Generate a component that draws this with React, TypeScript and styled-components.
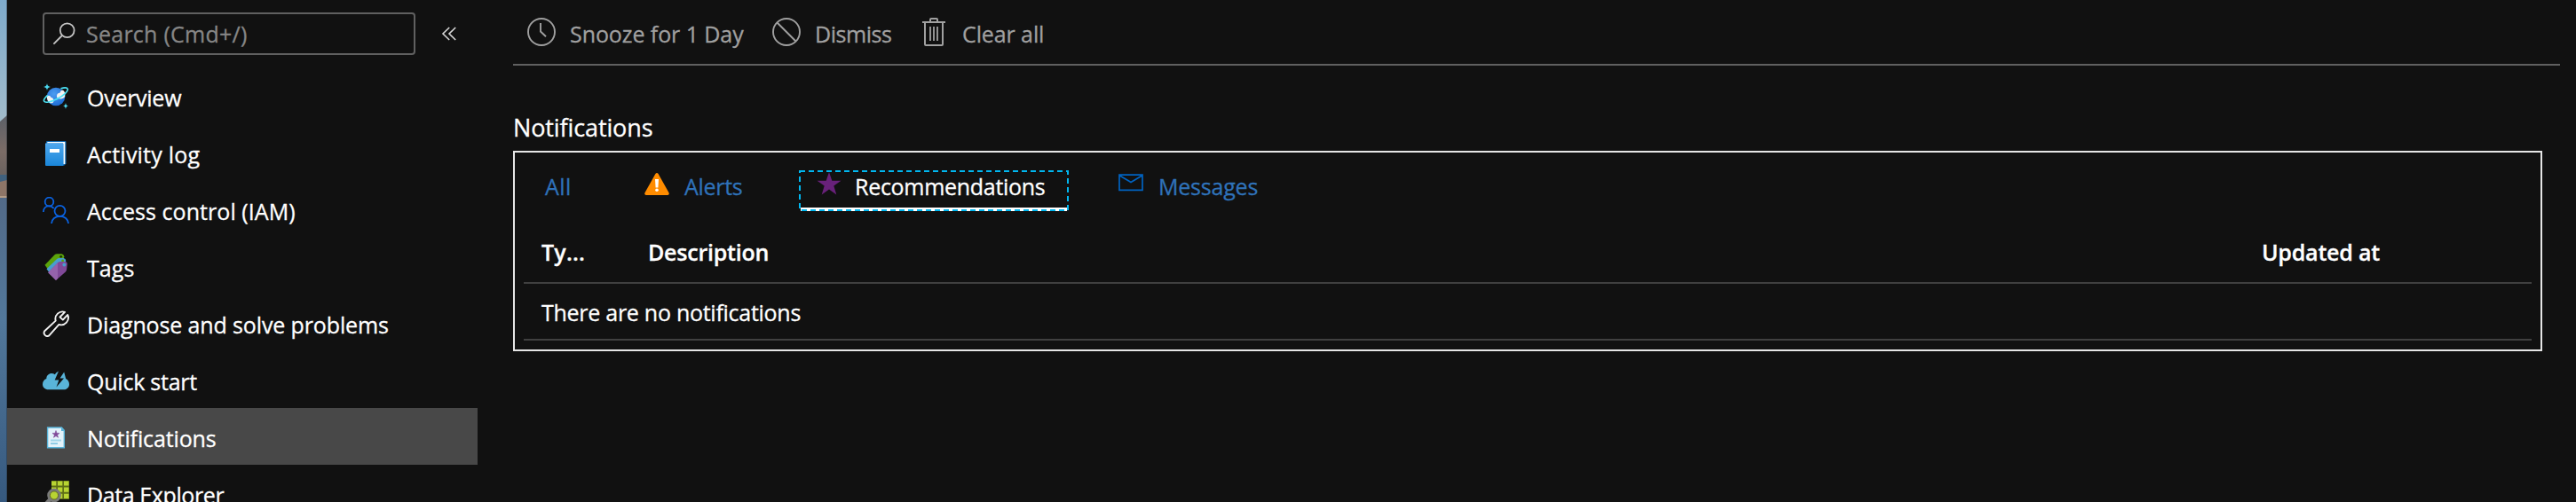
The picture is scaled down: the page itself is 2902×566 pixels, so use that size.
import React from "react";
import styled, { createGlobalStyle } from "styled-components";

const GlobalStyle = createGlobalStyle`
  * { box-sizing: border-box; }
  body {
    margin: 0;
    background: #111111;
    color: #ffffff;
    font-family: "Open Sans", "Noto Sans", sans-serif;
    font-size: 25px;
    -webkit-text-stroke: 0.3px currentColor;
    overflow: hidden;
  }
  svg { display: block; flex: none; }
`;

const Page = styled.div`
  display: flex;
  width: 100%;
  height: 566px;
  overflow: hidden;
`;

const Wallpaper = styled.div`
  flex: none;
  width: 8px;
  height: 566px;
`;

const Sidebar = styled.nav`
  flex: none;
  width: 570px;
  padding-top: 14px;
`;

const SearchRow = styled.div`
  display: flex;
  align-items: center;
  height: 48px;
  margin: 0 0 14px 40px;
`;

const SearchBox = styled.div`
  display: flex;
  align-items: center;
  width: 420px;
  height: 48px;
  padding-left: 9px;
  gap: 11px;
  border: 2px solid #606060;
  border-radius: 4px;
  color: #868686;
`;

const CollapseButton = styled.div`
  margin-left: 29px;
`;

const Text = styled.span<{ $track?: number }>`
  white-space: nowrap;
  line-height: 36px;
  letter-spacing: ${(p) => p.$track ?? 0}px;
`;

const NavItem = styled.div<{ $selected?: boolean }>`
  display: flex;
  align-items: center;
  gap: 20px;
  width: 530px;
  height: 64px;
  padding: 2px 0 0 40px;
  background: ${(p) => (p.$selected ? "#484848" : "transparent")};
`;

const NavLabel = styled(Text)`
  padding-top: 1px;
`;

const Main = styled.main`
  flex: 1;
  min-width: 0;
`;

const Toolbar = styled.div`
  display: flex;
  align-items: center;
  height: 74px;
  margin-right: 18px;
  padding-left: 16px;
  border-bottom: 2px solid #606060;
  color: #a0a0a0;
`;

const Command = styled.div<{ $width?: number }>`
  display: flex;
  align-items: center;
  gap: 16px;
  width: ${(p) => (p.$width ? `${p.$width}px` : "auto")};
`;

const CommandLabel = styled(Text)`
  padding-top: 3px;
`;

const Heading = styled.h2`
  margin: 52px 0 8px;
  font-size: 27px;
  font-weight: 400;
  line-height: 36px;
  letter-spacing: -0.12px;
`;

const Panel = styled.section`
  height: 226px;
  margin-right: 38px;
  padding: 20px 10px 0;
  border: 2px solid #e6e6e6;
`;

const Tabs = styled.div`
  display: flex;
  gap: 36px;
  height: 46px;
  padding-left: 4px;
`;

const Tab = styled.div<{ $width?: number; $active?: boolean; $gap?: number }>`
  display: flex;
  align-items: flex-start;
  gap: ${(p) => p.$gap ?? 17}px;
  width: ${(p) => (p.$width ? `${p.$width}px` : "auto")};
  height: 46px;
  padding-left: 20px;
  color: ${(p) => (p.$active ? "#ffffff" : "#2f72b9")};
`;

const TabLabel = styled(Text)`
  line-height: 37px;
`;

const ActiveTab = styled(Tab)`
  position: relative;
  background: linear-gradient(#fff, #fff) 2px 42px / 300px 4px no-repeat;
`;

const FocusRing = styled.svg`
  position: absolute;
  inset: 0;
`;

const HeaderRow = styled.div`
  display: grid;
  grid-template-columns: 120px 1818px 1fr;
  align-items: center;
  height: 70px;
  margin-top: 12px;
  padding-left: 20px;
  border-bottom: 2px solid #404040;
  font-weight: 600;
`;

const EmptyRow = styled.div`
  display: flex;
  align-items: center;
  height: 64px;
  padding: 1px 0 0 20px;
  border-bottom: 2px solid #404040;
`;

const WallpaperArt = () => (
  <svg width="8" height="566" viewBox="0 0 8 566">
    <defs>
      <linearGradient id="sky" x1="0" y1="0" x2="0" y2="1">
        <stop offset="0" stopColor="#7eaacb" />
        <stop offset="1" stopColor="#a3bccb" />
      </linearGradient>
      <linearGradient id="rock" x1="0" y1="0" x2="0" y2="1">
        <stop offset="0" stopColor="#5c6068" />
        <stop offset="0.6" stopColor="#7b6c66" />
        <stop offset="1" stopColor="#6a625f" />
      </linearGradient>
      <linearGradient id="sea" x1="0" y1="0" x2="0" y2="1">
        <stop offset="0" stopColor="#526a88" />
        <stop offset="0.4" stopColor="#52789b" />
        <stop offset="1" stopColor="#36597f" />
      </linearGradient>
    </defs>
    <rect width="8" height="140" fill="url(#sky)" />
    <path d="M0 137 8 130V198H0Z" fill="url(#rock)" />
    <rect y="197" width="8" height="9" fill="#40617e" />
    <path d="M0 205 8 203V223H0Z" fill="#8d7567" />
    <rect y="221" width="8" height="2" fill="#b39c87" />
    <rect y="223" width="8" height="343" fill="url(#sea)" />
    <rect x="7" width="1" height="566" fill="#222a31" opacity="0.4" />
  </svg>
);

const SearchIcon = () => (
  <svg width="27" height="28" viewBox="0 0 27 28" fill="none" stroke="#c4c4c4" strokeWidth="1.8">
    <circle cx="16.7" cy="10.2" r="7.9" />
    <path d="M11 16 1.4 25.6" />
  </svg>
);

const CollapseIcon = () => (
  <svg width="18" height="16" viewBox="0 0 18 16" fill="none" stroke="#d6d6d6" strokeWidth="1.6">
    <path d="M9.2 1 2 8l7.200 7M16.200 1 9 8l7.200 7" />
  </svg>
);

const OverviewIcon = () => (
  <svg width="30" height="30" viewBox="0 0 30 30">
    <defs>
      <radialGradient id="planet" cx="0.4" cy="0.35" r="0.7">
        <stop offset="0" stopColor="#4c9cf0" />
        <stop offset="1" stopColor="#1b6ad4" />
      </radialGradient>
    </defs>
    <circle cx="15" cy="15" r="10.300" fill="url(#planet)" />
    <path d="M4.800 14.500c2-1.500 4-.9 4.500 1.200 2.200.3 3.600 2.300 3.100 4.700-.5 1.500-2.300 2.400-4.400 1.700-2-1.700-3.300-4.300-3.200-7.600Z" fill="#f2f2f2" />
    <path d="M16 13.800c.2-2.200 1.800-3.200 3.500-3.100.6-2.500 2.200-3.700 4.200-2.500 1.500 1.500 1.900 4 1.500 6.500-1.300 2.500-4.400 3.300-7.600 2.400-1.300-.6-1.800-1.900-1.600-3.300Z" fill="#f2f2f2" />
    <path d="M20.500 5.900c3.700-1.300 7-1.400 7.700.3 1 2.400-4.300 7.500-11.800 11.200S2.600 22.400 1.600 20c-.6-1.500 1-4 4-6.700" fill="none" stroke="#4ce4f7" strokeWidth="1.7" />
    <path d="M5 0c.4 2.600 1.400 3.600 4 4-2.600.4-3.600 1.400-4 4-.4-2.600-1.400-3.600-4-4 2.600-.4 3.600-1.400 4-4ZM26 22c.3 2.300 1.200 3.200 3.200 3.500-2 .3-2.900 1.200-3.200 3.500-.3-2.300-1.200-3.200-3.200-3.500 2-.3 2.900-1.200 3.200-3.500Z" fill="#4ad6ee" />
  </svg>
);

const LogIcon = () => (
  <svg width="30" height="30" viewBox="0 0 30 30">
    <defs>
      <linearGradient id="book" x1="0" y1="0" x2="0" y2="1">
        <stop offset="0" stopColor="#4fa8ee" />
        <stop offset="1" stopColor="#1a86d9" />
      </linearGradient>
    </defs>
    <path d="M4 1.500Q4 1 5 1h20.500q1 0 1 1v24.500l-2 2H4Z" fill="#1068b0" />
    <path d="M5.500 2H25.300V27H23V3.600H5Z" fill="#ffffff" />
    <path d="M3 3.500h19.600q1 0 1 1V28q0 1-1 1H4q-1 0-1-1Z" fill="url(#book)" />
    <rect x="8" y="10" width="11" height="4" fill="#ffffff" />
  </svg>
);

const PeopleIcon = () => (
  <svg width="30" height="30" viewBox="0 0 30 30" fill="none" stroke="#0a62e0" strokeWidth="1.800">
    <circle cx="7.500" cy="5.500" r="4.800" />
    <path d="M.9 17c0-4.200 2.700-6.700 6.200-6.700 2.300 0 4.200 1 5.500 2.700" />
    <circle cx="19.500" cy="15.800" r="6" />
    <path d="M10 30c.3-5 4.300-8.200 9.500-8.200s9.200 3.200 9.600 8.200" />
  </svg>
);

const TagsIcon = () => (
  <svg width="30" height="30" viewBox="0 0 30 30">
    <path d="M2.500 12.800 13.300 1.500Q14.500.3 16.300.3h5.200q2.500.4 2.800 3L23 8 7 19Z" fill="#5ba30b" />
    <circle cx="20.700" cy="3.300" r="1.400" fill="#1b3208" />
    <path d="M4.500 17.300 15.800 6.200Q17 5 19 5h4.700q2.500.4 2.600 3L25 12 8 22Z" fill="#479fce" />
    <circle cx="22.600" cy="7.900" r="1.400" fill="#5ba30b" />
    <path d="M6.200 21.300 17.200 10Q18.500 8.800 20.400 9h5.400q2 .4 2 2.500l-.7 6.500q-.2 1.400-1.200 2.500L15 30Z" fill="#804998" />
    <path d="M6.200 21.300 17 10.200V28L15 30Z" fill="#9562ab" />
    <circle cx="24.300" cy="12.500" r="1.900" fill="#479fce" />
  </svg>
);

const WrenchIcon = () => (
  <svg width="30" height="30" viewBox="0 0 30 30" fill="none" stroke="#f2f2f2" strokeWidth="1.900" strokeLinejoin="round">
    <path d="M25 1.900A8 8 0 0 0 14.700 11.600L2.200 23.300A3.700 3.700 0 0 0 7.300 28.400L18.400 15.900A8 8 0 0 0 28.200 5L22.800 10.600 19.500 7.500Z" />
  </svg>
);

const QuickStartIcon = () => (
  <svg width="30" height="30" viewBox="0 0 30 30">
    <path d="M6.500 25.300C2.800 25.300 0 22.600 0 19.200c0-3.200 2-5.500 4.300-6.200C4.300 9.500 7 7 10.200 7c1.400 0 2.600.4 3.600 1.200l1.500-1.900L18 4.600l-4.300 9.900h4.600L15.500 22.500 24 12.500h-4.500L24.200 5.500l2 7.500C28.500 14 30 16.300 30 19.200c0 3.500-2.700 6.100-6.300 6.100Z" fill="#59b4d9" />
  </svg>
);

const NotificationsIcon = () => (
  <svg width="30" height="30" viewBox="0 0 30 30">
    <path d="M5.600 4h15.800L24.300 7.300v19.400H5.600Z" fill="#e3f2fa" stroke="#59b4d9" strokeWidth="1.400" />
    <path d="M21 3.500 25 8H21Z" fill="#59b4d9" />
    <path d="m15 7.500 1 2.900h3l-2.400 1.900.9 3-2.500-1.800-2.500 1.800.9-3L11 10.400h3Z" fill="#804998" stroke="#804998" strokeWidth="0.600" />
    <rect x="9" y="17.500" width="12" height="2" fill="#a0d5ea" />
    <rect x="9" y="21.500" width="8" height="1.200" fill="#59b4d9" />
  </svg>
);

const ExplorerIcon = () => (
  <svg width="30" height="30" viewBox="0 0 30 30">
    <rect x="10" width="20" height="21" fill="#5e6e17" />
    <path d="M10 .5h5.300v5H10ZM17 .5h5.300v5H17ZM24 .5h5.500v5H24ZM10 7.500h5.300v5.300H10ZM17 7.500h5.300v5.300H17ZM24 7.500h5.500v5.300H24ZM17 14.800h5.300v5.300H17ZM24 14.800h5.500v5.300H24Z" fill="#b8d432" />
    <path d="M8.500 21 1.500 28.500" stroke="#7a7a7a" strokeWidth="4.500" />
    <circle cx="13" cy="16.500" r="6.300" fill="#b8d432" stroke="#7a7a7a" strokeWidth="3" />
    <circle cx="13" cy="16.500" r="4.600" fill="none" stroke="#4a4f20" strokeWidth="0.800" />
  </svg>
);

const ClockIcon = () => (
  <svg width="32" height="32" viewBox="0 0 32 32" fill="none" stroke="#a0a0a0" strokeWidth="1.900">
    <circle cx="16" cy="16" r="15" />
    <path d="M15 6v9.500l6 5.700" />
  </svg>
);

const DismissIcon = () => (
  <svg width="32" height="32" viewBox="0 0 32 32" fill="none" stroke="#a0a0a0" strokeWidth="1.900">
    <circle cx="16" cy="16" r="15" />
    <path d="m5.500 5.500 21 21" />
  </svg>
);

const TrashIcon = () => (
  <svg width="32" height="32" viewBox="0 0 32 32" fill="none" stroke="#a0a0a0" strokeWidth="2">
    <path d="M3 5h26M12 5V2q0-1 1-1h6q1 0 1 1v3M6 5v25q0 1 1 1h18q1 0 1-1V5" />
    <path d="M12 10v16M16 10v16M20 10v16" strokeWidth="1.800" />
  </svg>
);

const AlertIcon = () => (
  <svg width="28" height="28" viewBox="0 0 28 28">
    <path d="M12.400 4q1.600-2 3.200 0l11.900 21.300q.8 2.500-1.300 2.700H1.800Q-.3 27.800.5 25.300Z" fill="#ff8c00" />
    <path d="M12 10h4l-.6 9.500h-2.800Z" fill="#ffffff" />
    <circle cx="14" cy="22.200" r="1.800" fill="#ffffff" />
  </svg>
);

const StarIcon = () => (
  <svg width="28" height="28" viewBox="0 0 28 28">
    <path d="m14 2 3.300 9.700H27.500L19.300 17.500 22.300 27.500 14 21.500 5.700 27.500 8.700 17.500.5 11.700H10.700Z" fill="#68217a" />
  </svg>
);

const MailIcon = () => (
  <svg width="28" height="28" viewBox="0 0 28 28" fill="none" stroke="#0063c1" strokeWidth="1.700">
    <path d="M1 5.200h26v17.200H1ZM1 5.700 14 13.500 27 5.700" />
  </svg>
);

const navItems: { label: string; icon: () => React.ReactElement; track?: number; selected?: boolean }[] = [
  { label: "Overview", icon: OverviewIcon, track: -0.27 },
  { label: "Activity log", icon: LogIcon, track: 0.22 },
  { label: "Access control (IAM)", icon: PeopleIcon, track: 0.06 },
  { label: "Tags", icon: TagsIcon, track: 0.07 },
  { label: "Diagnose and solve problems", icon: WrenchIcon, track: -0.13 },
  { label: "Quick start", icon: QuickStartIcon, track: -0.23 },
  { label: "Notifications", icon: NotificationsIcon, track: -0.12, selected: true },
  { label: "Data Explorer", icon: ExplorerIcon, track: -0.4 },
];

export default function App() {
  return (
    <>
      <GlobalStyle />
      <Page>
        <Wallpaper>
          <WallpaperArt />
        </Wallpaper>
        <Sidebar>
          <SearchRow>
            <SearchBox>
              <SearchIcon />
              <Text $track={0.25}>Search (Cmd+/)</Text>
            </SearchBox>
            <CollapseButton>
              <CollapseIcon />
            </CollapseButton>
          </SearchRow>
          {navItems.map(({ label, icon: Icon, track, selected }) => (
            <NavItem key={label} $selected={selected}>
              <Icon />
              <NavLabel $track={track}>{label}</NavLabel>
            </NavItem>
          ))}
        </Sidebar>
        <Main>
          <Toolbar>
            <Command $width={276}>
              <ClockIcon />
              <CommandLabel $track={-0.08}>Snooze for 1 Day</CommandLabel>
            </Command>
            <Command $width={166}>
              <DismissIcon />
              <CommandLabel $track={-0.45}>Dismiss</CommandLabel>
            </Command>
            <Command>
              <TrashIcon />
              <CommandLabel $track={-0.1}>Clear all</CommandLabel>
            </Command>
          </Toolbar>
          <Heading>Notifications</Heading>
          <Panel>
            <Tabs>
              <Tab $width={76}>
                <TabLabel $track={0.5}>All</TabLabel>
              </Tab>
              <Tab $width={158}>
                <AlertIcon />
                <TabLabel $track={-0.3}>Alerts</TabLabel>
              </Tab>
              <ActiveTab $width={304} $active $gap={15}>
                <StarIcon />
                <TabLabel $track={-0.29}>Recommendations</TabLabel>
                <FocusRing width="304" height="46" viewBox="0 0 304 46">
                  <rect x="1" y="1" width="302" height="44" fill="none" stroke="#00b7f0" strokeWidth="2" strokeDasharray="6 4" />
                </FocusRing>
              </ActiveTab>
              <Tab>
                <MailIcon />
                <TabLabel $track={-0.2}>Messages</TabLabel>
              </Tab>
            </Tabs>
            <HeaderRow>
              <Text $track={0.2}>Ty...</Text>
              <Text $track={-0.23}>Description</Text>
              <Text $track={-0.2}>Updated at</Text>
            </HeaderRow>
            <EmptyRow>
              <Text $track={-0.27}>There are no notifications</Text>
            </EmptyRow>
          </Panel>
        </Main>
      </Page>
    </>
  );
}
